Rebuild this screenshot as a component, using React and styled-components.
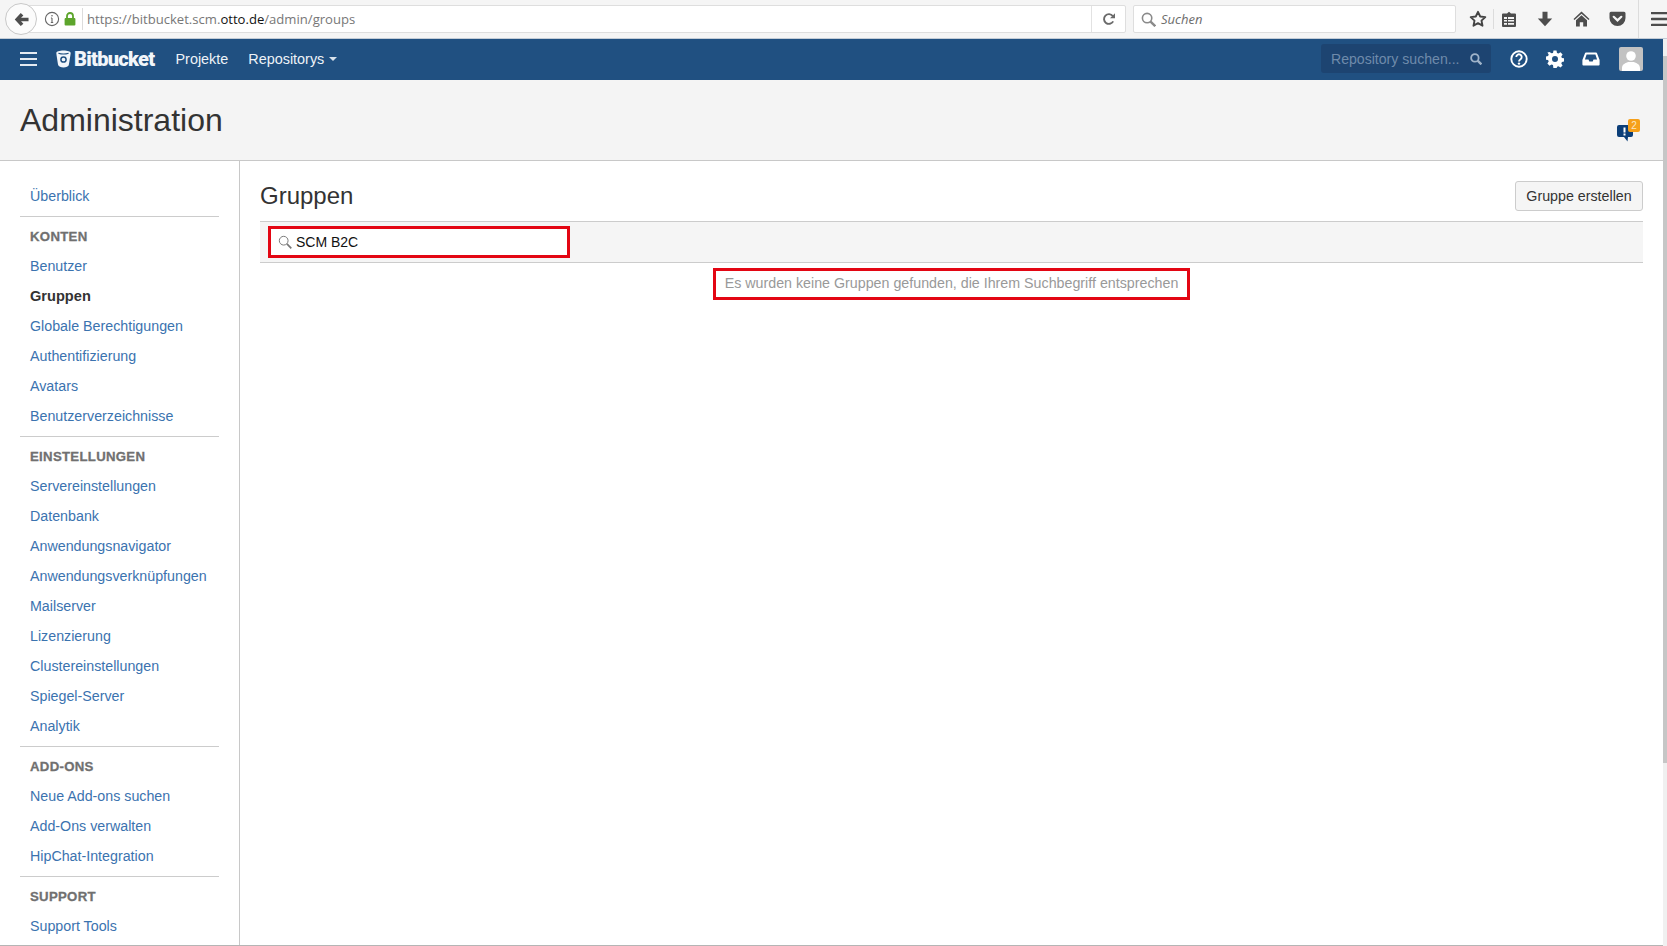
import React from "react";
import styled, { createGlobalStyle } from "styled-components";

const Global = createGlobalStyle`
  html, body { margin: 0; padding: 0; height: 100%; overflow: hidden; background: #fff; }
  * { box-sizing: border-box; }
  #root { height: 100%; }
`;

const Page = styled.div`
  width: 1667px; height: 946px; display: flex; flex-direction: column;
  font-family: "Liberation Sans", Arial, sans-serif; font-size: 14.25px; color: #333;
`;

/* browser chrome */
const Chrome = styled.div`
  height: 39px; flex: none; background: #f5f5f5; display: flex; align-items: center;
  padding-left: 5px; border-bottom: 1px solid #c3ccd6; overflow: hidden;
`;
const BackButton = styled.div`
  width: 32px; height: 32px; border-radius: 50%; background: #fbfbfb; border: 1px solid #c8c8c8;
  display: flex; align-items: center; justify-content: center; flex: none; z-index: 1;
`;
const UrlBar = styled.div`
  width: 1105px; height: 28px; margin-left: -16px; padding-left: 16px; background: #fff;
  border: 1px solid #dedede; border-radius: 0 2px 2px 0; display: flex; align-items: center; flex: none;
`;
const SiteIcons = styled.div`
  width: 44px; height: 100%; padding-left: 6px; display: flex; align-items: center; gap: 4px; flex: none;
`;
const UrlDivider = styled.div` width: 1px; height: 22px; background: #dcdcdc; flex: none; `;
const UrlText = styled.div`
  flex: 1; padding-left: 4px; font-family: "Open Sans", sans-serif; font-size: 13.1px; color: #777; white-space: nowrap;
  b { color: #111; font-weight: 400; }
`;
const ReloadBox = styled.div`
  width: 34px; height: 100%; border-left: 1px solid #e2e2e2; display: flex; align-items: center; justify-content: center;
`;
const SearchBar = styled.div`
  width: 323px; height: 28px; margin-left: 7px; background: #fff; border: 1px solid #dedede; border-radius: 2px;
  padding-left: 7px; display: flex; align-items: center; gap: 5px; flex: none;
  font-family: "Open Sans", sans-serif; font-style: italic; font-size: 13px; color: #6d6d6d;
`;
const ToolIcons = styled.div`
  margin-left: 12px; display: flex; align-items: center; height: 100%; flex: none;
`;
const ToolIcon = styled.div`
  width: ${p => p.$w}px; display: flex; justify-content: center; align-items: center; flex: none;
`;
const ToolDivider = styled.div`
  width: 1px; height: ${p => p.$h}px; margin-left: ${p => p.$ml || 0}px; background: #dcdcdc; flex: none;
`;

/* page below chrome */
const Body = styled.div` flex: 1; display: flex; min-height: 0; `;
const Main = styled.div` flex: 1; display: flex; flex-direction: column; min-width: 0; border-bottom: 1px solid #b5b5b5; `;
const Rail = styled.div` width: 4px; flex: none; background: #f0f0f0; display: flex; flex-direction: column; `;
const Thumb = styled.div` height: 707px; margin-top: 17px; background: #c6c6c6; `;

const Nav = styled.div`
  height: 41px; flex: none; background: #205081; color: #fff; display: flex; align-items: center; padding: 0 20px 2px;
`;
const Burger = styled.div`
  width: 17px; display: flex; flex-direction: column; gap: 4px; margin-right: 19px;
  span { display: block; height: 2px; background: #e4eaf1; }
`;
const Logo = styled.div`
  display: flex; align-items: center; gap: 3px; width: 119.5px; flex: none;
`;
const LogoText = styled.span`
  font-family: "Roboto", sans-serif; font-weight: 900; font-size: 20px; letter-spacing: -0.7px; color: #f2f6fa;
`;
const NavLink = styled.span`
  margin-right: 20px; display: flex; align-items: center; color: #eef3f8; font-size: 14.4px;
`;
const Caret = styled.span`
  width: 0; height: 0; margin-left: 5px; border-left: 4px solid transparent; border-right: 4px solid transparent;
  border-top: 4px solid #d8e2ec;
`;
const Spacer = styled.div` flex: 1; `;
const RepoSearch = styled.div`
  width: 170px; height: 29px; background: #1d4471; border-radius: 3px; padding: 0 9px 0 10px; display: flex;
  align-items: center; justify-content: space-between; color: #6f8bab; font-size: 14.1px; white-space: nowrap; flex: none;
`;
const NavIcons = styled.div` display: flex; align-items: center; margin-left: 19px; gap: 0; `;
const NavIcon = styled.div` width: ${p => p.$w}px; display: flex; justify-content: center; align-items: center; flex: none; `;
const Avatar = styled.div`
  width: 24px; height: 24px; margin-left: 19px; margin-right: 0; border-radius: 2px; background: #c2c2c2; overflow: hidden; flex: none;
  svg { display: block; }
`;

const Header = styled.div`
  height: 81px; flex: none; background: #f4f4f4; border-bottom: 1px solid #c8c8c8; display: flex; align-items: center;
  justify-content: space-between; padding: 0 23px 0 20px;
`;
const Title = styled.h1`
  margin: 0 0 1px; font-size: 32px; font-weight: 400; color: #333; line-height: 1;
`;
const Notice = styled.div`
  position: relative; width: 23px; height: 23px; margin-top: 20px; display: flex; align-items: flex-end;
`;
const Badge = styled.span`
  position: absolute; top: 0; right: 0; width: 12px; height: 13px; background: #f6a01a; border-radius: 2px;
  color: #fbe7c4; font-size: 10px; line-height: 13px; text-align: center;
`;

const Columns = styled.div` flex: 1; display: flex; min-height: 0; `;
const Side = styled.nav`
  width: 240px; flex: none; border-right: 1px solid #c8c8c8; padding: 20px 20px 0;
`;
const SideItem = styled.a`
  display: block; height: 30px; line-height: 30px; padding-left: 10px; white-space: nowrap;
  color: ${p => (p.$active ? "#333" : "#3b73af")}; font-weight: ${p => (p.$active ? 700 : 400)};
  font-size: ${p => (p.$active ? "14.6px" : "inherit")};
`;
const SideHeading = styled.div`
  height: 30px; line-height: 31px; padding-left: 10px; color: #707070; font-weight: 700; font-size: 13.2px;
  letter-spacing: 0.3px; text-transform: uppercase; -webkit-text-stroke: 0.3px #707070;
`;
const SideRule = styled.hr`
  margin: 4.5px 0; height: 1px; border: 0; background: #ccc; width: 199px;
`;

const Content = styled.main` flex: 1; min-width: 0; padding: 20px 20px 0; `;
const ContentHead = styled.div`
  display: flex; justify-content: space-between; align-items: center; height: 30px; margin-bottom: 10px;
`;
const Heading = styled.h2` margin: 0; font-size: 24px; font-weight: 400; color: #333; `;
const Button = styled.button`
  width: 128px; height: 30px; background: #f5f5f5; border: 1px solid #ccc; border-radius: 3px; padding: 0;
  font: inherit; color: #333;
`;
const Filter = styled.div`
  height: 42px; background: #f5f5f5; border-top: 1px solid #ccc; border-bottom: 1px solid #ccc; padding: 4px 8px;
`;
const FilterBox = styled.div`
  width: 302px; height: 32px; background: #fff; border: 3px solid #e30613; padding-left: 7px; display: flex;
  align-items: center; gap: 4px; color: #111; font-size: 14px;
`;
const EmptyRow = styled.div` display: flex; justify-content: center; margin: 5px 0 0; `;
const Empty = styled.div`
  height: 32px; padding: 0 8.5px; border: 3px solid #e30613; color: #999; line-height: 24px; white-space: nowrap;
`;

const sideGroups = [
  { items: ["Überblick"] },
  { title: "Konten", items: ["Benutzer", "Gruppen", "Globale Berechtigungen", "Authentifizierung", "Avatars", "Benutzerverzeichnisse"] },
  { title: "Einstellungen", items: ["Servereinstellungen", "Datenbank", "Anwendungsnavigator", "Anwendungsverknüpfungen", "Mailserver", "Lizenzierung", "Clustereinstellungen", "Spiegel-Server", "Analytik"] },
  { title: "Add-ons", items: ["Neue Add-ons suchen", "Add-Ons verwalten", "HipChat-Integration"] },
  { title: "Support", items: ["Support Tools"] },
];

const dark = "#4d4d4d";

const BackIcon = () => (
  <svg width="15" height="15" viewBox="0 0 16 16"><path d="M7.200 1 .8 8l6.400 7 2.800-2.600-2.500-2.500H15.500V6.100H7.500L10 3.600z" fill={dark} /></svg>
);
const InfoIcon = () => (
  <svg width="16" height="16" viewBox="0 0 16 16" fill="none" stroke="#666" strokeWidth="1.1">
    <circle cx="8" cy="8" r="6.600" /><path d="M8 7v4.500M6.800 11.500h2.400M6.900 7h1.100" /><circle cx="8" cy="4.800" r=".8" fill="#666" stroke="none" />
  </svg>
);
const LockIcon = () => (
  <svg width="12" height="14" viewBox="0 0 12 14"><path d="M3 6V4a3 3 0 0 1 6 0v2" fill="none" stroke="#5da52c" strokeWidth="1.800" /><rect x=".6" y="6" width="10.800" height="7.600" rx="1" fill="#5da52c" /></svg>
);
const ReloadIcon = () => (
  <svg width="14" height="14" viewBox="0 0 14 14" fill="none"><path d="M11.200 9.400A4.900 4.900 0 1 1 10.800 4" stroke="#6a6a6a" strokeWidth="1.900" /><path d="M13 1.200v5H8z" fill="#6a6a6a" /></svg>
);
const LensIcon = ({ c = "#8a8a8a", size = 15, sw = 1.7 }) => (
  <svg width={size} height={size} viewBox="0 0 16 16" fill="none" stroke={c} strokeWidth={sw}><circle cx="6.500" cy="6.500" r="5" /><path d="m10.200 10.200 5 5" strokeWidth={sw + 0.8} /></svg>
);
const StarIcon = () => (
  <svg width="18" height="18" viewBox="0 0 18 18"><path d="m9 1.800 2.200 4.700 5.100.6-3.800 3.500 1 5.100L9 13.200l-4.500 2.500 1-5.100L1.700 7.100l5.100-.6z" fill="none" stroke="#444" strokeWidth="1.900" strokeLinejoin="round" /></svg>
);
const ListIcon = () => (
  <svg width="16" height="17" viewBox="0 0 16 17"><path d="M6 2.400 8 .8l2 1.600h4a1 1 0 0 1 1 1V15a1 1 0 0 1-1 1H2a1 1 0 0 1-1-1V3.400a1 1 0 0 1 1-1z" fill={dark} /><path d="M3 6h10v2H3zM3 9h10v1.600H3zM3 12h10v1.700H3z" fill="#f5f5f5" /><path d="M6 5.500h1v9H6z" fill={dark} /></svg>
);
const DownIcon = () => (
  <svg width="16" height="16" viewBox="0 0 16 16"><path d="M5.500.8h5v6.700h4.700L8 15.300.8 7.500h4.700z" fill={dark} /></svg>
);
const HomeIcon = () => (
  <svg width="17" height="16" viewBox="0 0 17 16"><path d="M8.500.5 16.500 8l-1 1-7-6.300L1.500 9l-1-1z" fill={dark} /><path d="M8.500 4.200 14 9.200V15.500h-3.800v-4.300H6.800v4.300H3V9.200z" fill={dark} /></svg>
);
const PocketIcon = () => (
  <svg width="17" height="16" viewBox="0 0 17 16"><path d="M2 .8h13a1.500 1.500 0 0 1 1.500 1.500V7a8 8 0 0 1-16 0V2.300A1.500 1.500 0 0 1 2 .8z" fill={dark} /><path d="m4.700 5.800 3.800 3.600 3.800-3.600" fill="none" stroke="#f5f5f5" strokeWidth="2.200" strokeLinecap="round" /></svg>
);
const MenuIcon = () => (
  <svg width="18" height="14" viewBox="0 0 18 14"><path d="M1 1h16M1 7h16M1 13h16" stroke={dark} strokeWidth="2.600" strokeLinecap="round" /></svg>
);
const BucketIcon = () => (
  <svg width="15" height="18" viewBox="0 0 15 18"><path d="M7.500.5C3.500.5.300 1.500.300 2.900c0 .4 1.600 11 2 12.300.2.900 2.600 2.300 5.200 2.300s5-1.400 5.200-2.300c.4-1.300 2-11.900 2-12.300C14.700 1.500 11.500.5 7.500.5z" fill="#f2f6fa" /><path d="M2.400 3.200c2.800.9 7.400.9 10.200 0" stroke="#205081" strokeWidth="1.100" fill="none" /><circle cx="7.500" cy="9.500" r="2.600" fill="none" stroke="#205081" strokeWidth="1.500" /></svg>
);
const HelpIcon = () => (
  <svg width="18" height="18" viewBox="0 0 18 18" fill="none"><circle cx="9" cy="9" r="7.700" stroke="#fff" strokeWidth="1.900" /><path d="M6.300 7a2.700 2.700 0 1 1 4.300 2.200c-1 .7-1.600 1.100-1.600 2.300" stroke="#fff" strokeWidth="1.900" /><circle cx="9" cy="13.600" r="1.200" fill="#fff" /></svg>
);
const GearIcon = () => (
  <svg width="18" height="18" viewBox="0 0 18 18"><path fill="#fff" fillRule="evenodd" d="M7.500.6h3l.5 2.400 1.500.6 2-1.300 2.100 2.100-1.300 2 .6 1.500 2.400.5v3l-2.400.5-.6 1.500 1.300 2-2.100 2.100-2-1.300-1.500.6-.5 2.400h-3L7 15l-1.500-.6-2 1.300-2.100-2.100 1.300-2-.6-1.500-2.400-.5v-3l2.400-.5.6-1.500-1.300-2L3.500 1.900l2 1.300L7 3zM9 6a3 3 0 1 0 0 6 3 3 0 0 0 0-6z" /></svg>
);
const TrayIcon = () => (
  <svg width="18" height="14" viewBox="0 0 18 14"><path d="M4 .5h10a1 1 0 0 1 1 .7L17.600 8v4.400a1 1 0 0 1-1 1H1.400a1 1 0 0 1-1-1V8L3 1.200a1 1 0 0 1 1-.7z" fill="#fff" /><path d="M4.600 2.500h8.800l1.700 5H11.500L10.700 9.500H7.300L6.500 7.500H2.900z" fill="#205081" /></svg>
);
const PersonIcon = () => (
  <svg width="24" height="24" viewBox="0 0 24 24"><circle cx="12" cy="9" r="4.800" fill="#fff" /><path d="M3 24v-3c0-4 4-5 6-6h6c2 1 6 2 6 6v3z" fill="#fff" /></svg>
);
const ChatIcon = () => (
  <svg width="16" height="17" viewBox="0 0 16 17"><path d="M2 0h12a2 2 0 0 1 2 2v8a2 2 0 0 1-2 2h-3l-.5 4.500L7 12H2a2 2 0 0 1-2-2V2a2 2 0 0 1 2-2z" fill="#0b3e78" /><path d="M6.500 2.500h2v5h-2zM6.500 8.600h2v2h-2z" fill="#fff" /></svg>
);

export default function App() {
  return (
    <Page>
      <Global />
      <Chrome>
        <BackButton><BackIcon /></BackButton>
        <UrlBar>
          <SiteIcons><InfoIcon /><LockIcon /></SiteIcons>
          <UrlDivider />
          <UrlText>https://bitbucket.scm.<b>otto.de</b>/admin/groups</UrlText>
          <ReloadBox><ReloadIcon /></ReloadBox>
        </UrlBar>
        <SearchBar><LensIcon />Suchen</SearchBar>
        <ToolIcons>
          <ToolIcon $w={20}><StarIcon /></ToolIcon>
          <ToolDivider $h={20} $ml={5} />
          <ToolIcon $w={30}><ListIcon /></ToolIcon>
          <ToolIcon $w={42}><DownIcon /></ToolIcon>
          <ToolIcon $w={30}><HomeIcon /></ToolIcon>
          <ToolIcon $w={42}><PocketIcon /></ToolIcon>
          <ToolDivider $h={38} />
          <ToolIcon $w={42}><MenuIcon /></ToolIcon>
        </ToolIcons>
      </Chrome>
      <Body>
        <Main>
          <Nav>
            <Burger><span /><span /><span /></Burger>
            <Logo><BucketIcon /><LogoText>Bitbucket</LogoText></Logo>
            <NavLink>Projekte</NavLink>
            <NavLink>Repositorys<Caret /></NavLink>
            <Spacer />
            <RepoSearch>Repository suchen...<LensIcon c="#9fb3c9" size={12} sw={2.4} /></RepoSearch>
            <NavIcons>
              <NavIcon $w={18}><HelpIcon /></NavIcon>
              <NavIcon $w={54}><GearIcon /></NavIcon>
              <NavIcon $w={18}><TrayIcon /></NavIcon>
              <Avatar><PersonIcon /></Avatar>
            </NavIcons>
          </Nav>
          <Header>
            <Title>Administration</Title>
            <Notice><ChatIcon /><Badge>2</Badge></Notice>
          </Header>
          <Columns>
            <Side>
              {sideGroups.map((g, i) => (
                <React.Fragment key={i}>
                  {i > 0 && <SideRule />}
                  {g.title && <SideHeading>{g.title}</SideHeading>}
                  {g.items.map(it => <SideItem key={it} $active={it === "Gruppen"}>{it}</SideItem>)}
                </React.Fragment>
              ))}
            </Side>
            <Content>
              <ContentHead>
                <Heading>Gruppen</Heading>
                <Button>Gruppe erstellen</Button>
              </ContentHead>
              <Filter>
                <FilterBox><LensIcon c="#777" size={14} sw={1.1} />SCM B2C</FilterBox>
              </Filter>
              <EmptyRow><Empty>Es wurden keine Gruppen gefunden, die Ihrem Suchbegriff entsprechen</Empty></EmptyRow>
            </Content>
          </Columns>
        </Main>
        <Rail><Thumb /></Rail>
      </Body>
    </Page>
  );
}
